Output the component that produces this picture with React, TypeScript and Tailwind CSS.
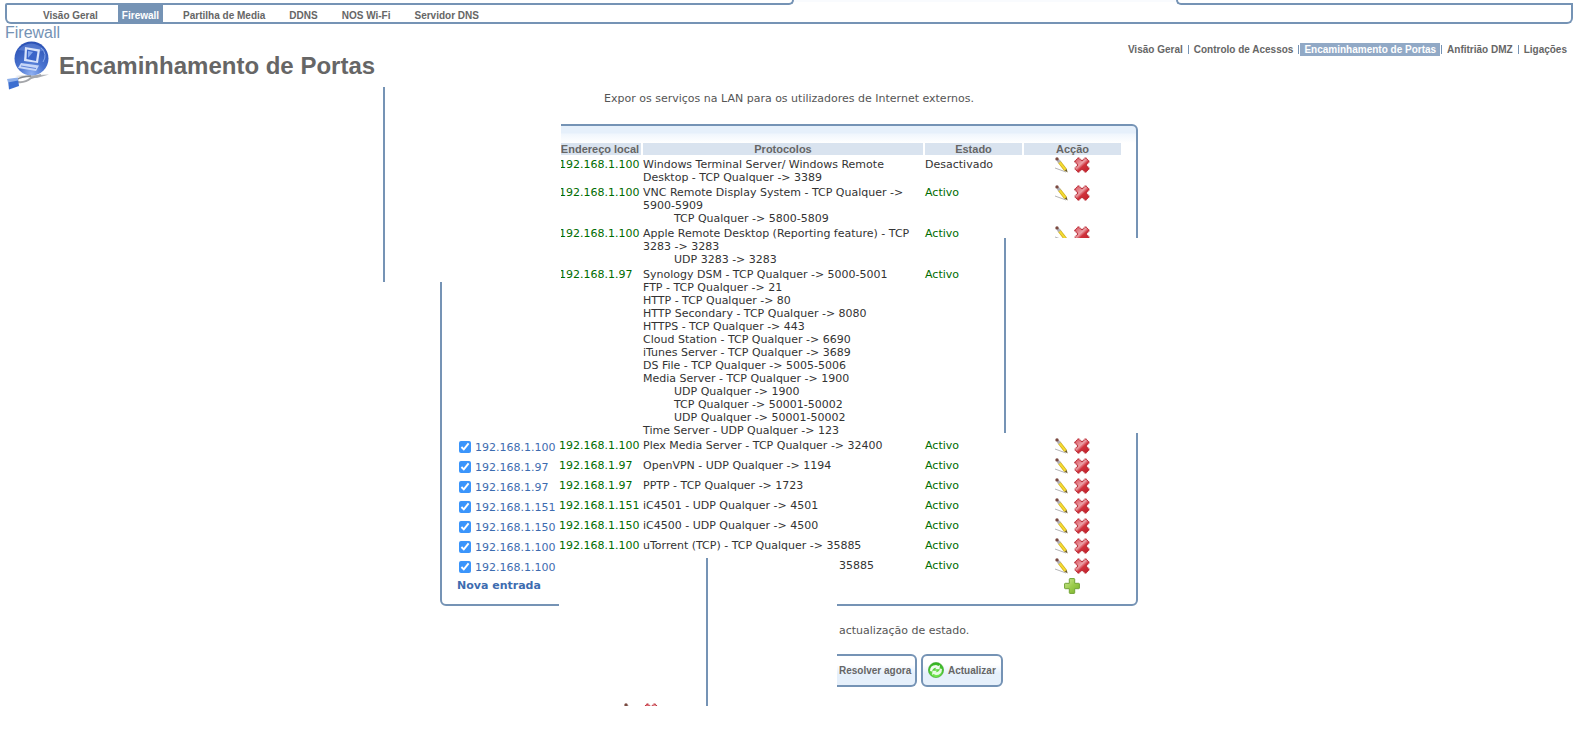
import React from "react";

const ARIAL = "font-['Liberation_Sans',Arial,sans-serif]";
const VERDANA = "font-['DejaVu_Sans',Verdana,sans-serif]";

function GlobeIcon() {
  return (
    <svg width="44" height="50" viewBox="0 0 44 50" aria-hidden="true">
      <defs>
        <radialGradient id="globe" cx="50%" cy="95%" r="95%">
          <stop offset="0" stopColor="#8fb0f2" />
          <stop offset="0.4" stopColor="#4a74d0" />
          <stop offset="1" stopColor="#2a50b4" />
        </radialGradient>
      </defs>
      <path d="M8 35 L42 33.5 L30 37 Z" fill="#b0b3b8" />
      <circle cx="24.5" cy="17.500" r="17" fill="url(#globe)" />
      <path d="M11 9 Q24 -4 38 9 Q32 12 25 10 Q17 10 11 9Z" fill="#8fb0f0" opacity="0.35" />
      <path d="M34 7 Q41 13 36 21" stroke="#89a9ea" strokeWidth="1" fill="none" />
      <path d="M18 6 L33 8.500 L31 22 L17 20 Z" fill="#d8e3fa" />
      <path d="M20 8.500 L30.500 10.500 L29 20 L19.500 18 Z" fill="#3a64c8" />
      <path d="M21 10 L26 11 L21 17 Z" fill="#86a8ee" />
      <path d="M14 22 L32 24.500 L29 30 L11 27 Z" fill="#c6d6f8" />
      <path d="M14 25 L29 27.500" stroke="#5f84d8" strokeWidth="1" />
      <path d="M11 41 Q18 42 24 37 L34 34" stroke="#a4a6aa" strokeWidth="2" fill="none" />
      <path d="M9 39 Q14 35.500 24 35" stroke="#85888d" strokeWidth="1.500" fill="none" />
      <path d="M1 39 L11 37.500 L12 45 L2 48.500 Z" fill="#3d6fd0" />
      <path d="M0 38 L11 36.500 L11 39.500 L1 41.500Z" fill="#8fb0ea" />
    </svg>
  );
}

function PencilIcon() {
  return (
    <svg width="16" height="16" viewBox="0 0 16 16" aria-hidden="true">
      <path d="M1 11 L12 15" stroke="#b5b5b5" strokeWidth="1" />
      <path d="M5 4.500 L11.600 13" stroke="#cfae1c" strokeWidth="3.400" />
      <path d="M5 4.500 L11.600 13" stroke="#f4dc34" strokeWidth="2" />
      <path d="M3.600 2.700 L5.600 5.300" stroke="#b0b0b8" strokeWidth="3" />
      <circle cx="3" cy="1.900" r="1.700" fill="#7a4a40" />
      <path d="M10.700 13.600 L12.800 12 L13.600 15.600 Z" fill="#6b5a28" />
    </svg>
  );
}

function DeleteIcon() {
  return (
    <svg width="16" height="16" viewBox="0 0 16 16" aria-hidden="true">
      <defs>
        <linearGradient id="cross" x1="0" y1="0" x2="0.9" y2="1">
          <stop offset="0" stopColor="#d94a55" />
          <stop offset="0.450" stopColor="#eba0a6" />
          <stop offset="0.600" stopColor="#d0333d" />
          <stop offset="1" stopColor="#c4202a" />
        </linearGradient>
      </defs>
      <path
        d="M4.500 .6 L8 4 L11.500 .6 L15.400 4.500 L12 8 L15.400 11.500 L11.500 15.400 L8 12 L4.500 15.400 L.6 11.500 L4 8 L.6 4.500 Z"
        fill="url(#cross)"
        stroke="#b92c36"
        strokeWidth="1.100"
        strokeDasharray="1.200 0.500"
      />
    </svg>
  );
}

function AddIcon() {
  return (
    <svg width="16" height="16" viewBox="0 0 16 16" aria-hidden="true">
      <defs>
        <linearGradient id="plus" x1="0" y1="0" x2="1" y2="1">
          <stop offset="0" stopColor="#cfe89a" />
          <stop offset="0.500" stopColor="#9ccc4c" />
          <stop offset="1" stopColor="#78b02c" />
        </linearGradient>
      </defs>
      <path
        d="M6 .6 H10 Q10.700 .6 10.700 1.300 V5.300 H14.700 Q15.400 5.300 15.400 6 V10 Q15.400 10.700 14.700 10.700 H10.700 V14.700 Q10.700 15.400 10 15.400 H6 Q5.300 15.400 5.300 14.700 V10.700 H1.300 Q.6 10.700 .6 10 V6 Q.6 5.300 1.300 5.300 H5.300 V1.300 Q5.300 .6 6 .6Z"
        fill="url(#plus)"
        stroke="#72a336"
        strokeWidth="1"
      />
    </svg>
  );
}

function RefreshIcon() {
  return (
    <svg width="16" height="16" viewBox="0 0 16 16" aria-hidden="true">
      <defs>
        <radialGradient id="refresh" cx="50%" cy="80%" r="80%">
          <stop offset="0" stopColor="#7df05a" />
          <stop offset="1" stopColor="#2fae1c" />
        </radialGradient>
      </defs>
      <circle cx="8" cy="8" r="7.600" fill="url(#refresh)" stroke="#3aa52a" strokeWidth="0.600" />
      <path d="M2 9 Q2 3 8 3 L10.500 4 L12 3 L11.500 7.200 L7 7.200 L8.500 5.800 Q5 5.500 4 9.500 Z" fill="#fff" opacity="0.920" />
      <path d="M14 7 Q14 13 8 13 L5.500 12 L4 13 L4.500 8.800 L9 8.800 L7.500 10.200 Q11 10.500 12 6.500 Z" fill="#fff" opacity="0.850" />
    </svg>
  );
}

type Line = { text: string; sub?: boolean };
type Entry = {
  host?: string;
  local?: string;
  lines: Line[];
  state: string;
  actions: boolean;
  clipped?: boolean;
};

const l = (text: string): Line => ({ text });
const s = (text: string): Line => ({ text, sub: true });

const entries: Entry[] = [
  { local: "192.168.1.100", lines: [l("Windows Terminal Server/ Windows Remote Desktop - TCP Qualquer -> 3389")], state: "Desactivado", actions: true },
  { local: "192.168.1.100", lines: [l("VNC Remote Display System - TCP Qualquer -> 5900-5909"), s("TCP Qualquer -> 5800-5809")], state: "Activo", actions: true },
  { local: "192.168.1.100", lines: [l("Apple Remote Desktop (Reporting feature) - TCP 3283 -> 3283"), s("UDP 3283 -> 3283")], state: "Activo", actions: true },
  {
    local: "192.168.1.97",
    lines: [
      l("Synology DSM - TCP Qualquer -> 5000-5001"),
      l("FTP - TCP Qualquer -> 21"),
      l("HTTP - TCP Qualquer -> 80"),
      l("HTTP Secondary - TCP Qualquer -> 8080"),
      l("HTTPS - TCP Qualquer -> 443"),
      l("Cloud Station - TCP Qualquer -> 6690"),
      l("iTunes Server - TCP Qualquer -> 3689"),
      l("DS File - TCP Qualquer -> 5005-5006"),
      l("Media Server - TCP Qualquer -> 1900"),
      s("UDP Qualquer -> 1900"),
      s("TCP Qualquer -> 50001-50002"),
      s("UDP Qualquer -> 50001-50002"),
      l("Time Server - UDP Qualquer -> 123"),
    ],
    state: "Activo",
    actions: false,
  },
  { host: "192.168.1.100", local: "192.168.1.100", lines: [l("Plex Media Server - TCP Qualquer -> 32400")], state: "Activo", actions: true },
  { host: "192.168.1.97", local: "192.168.1.97", lines: [l("OpenVPN - UDP Qualquer -> 1194")], state: "Activo", actions: true },
  { host: "192.168.1.97", local: "192.168.1.97", lines: [l("PPTP - TCP Qualquer -> 1723")], state: "Activo", actions: true },
  { host: "192.168.1.151", local: "192.168.1.151", lines: [l("iC4501 - UDP Qualquer -> 4501")], state: "Activo", actions: true },
  { host: "192.168.1.150", local: "192.168.1.150", lines: [l("iC4500 - UDP Qualquer -> 4500")], state: "Activo", actions: true },
  { host: "192.168.1.100", local: "192.168.1.100", lines: [l("uTorrent (TCP) - TCP Qualquer -> 35885")], state: "Activo", actions: true },
  { host: "192.168.1.100", lines: [l("35885")], state: "Activo", actions: true, clipped: true },
];

function EntryRow({ entry, index }: { entry: Entry; index: number }) {
  const id = `entry-${index}`;
  return (
    <tr className="align-top">
      <td className="p-0">
        {entry.host && (
          <div className="flex h-[18px] items-center gap-1 pl-[2px]">
            <input id={id} type="checkbox" defaultChecked className="m-0 size-3 shrink-0 accent-[#3b95fb]" />
            <label htmlFor={id} className="text-[#3d6cb0]">{entry.host}</label>
          </div>
        )}
      </td>
      <td className="p-0 text-[#006c00]">
        <div className="-mb-px whitespace-nowrap pt-px">{entry.local}</div>
      </td>
      <td className="p-0">
        <div className={entry.clipped ? "-mb-px pl-[196px] pt-px" : "-mb-px pt-px"}>
          {entry.lines.map((line, i) => (
            <div key={i} className={line.sub ? "pl-[31px]" : ""}>{line.text}</div>
          ))}
        </div>
      </td>
      <td className={entry.state === "Activo" ? "p-0 text-[#006c00]" : "p-0"}>
        <div className="-mb-px pt-px">{entry.state}</div>
      </td>
      <td className="p-0">
        {entry.actions && (
          <div className="flex h-[18px] items-start justify-center gap-1 pr-[2px]">
            <button type="button" aria-label="Editar"><PencilIcon /></button>
            <button type="button" aria-label="Remover"><DeleteIcon /></button>
          </div>
        )}
      </td>
    </tr>
  );
}

const tabs = ["Partilha de Media", "DDNS", "NOS Wi-Fi", "Servidor DNS"];

export default function App() {
  return (
    <div className={`min-h-screen bg-white text-[11px] leading-[13px] text-[#333333] ${VERDANA}`}>
      <header className={`px-[5px] text-[10px] font-bold text-[#666666] ${ARIAL}`}>
        <div className="flex h-[5px]">
          <div className="flex w-[calc(50%+5px)] flex-col">
            <div className="h-[3px] w-full">
              <div className="ml-auto h-[5px] w-2 rounded-br-[6px] border-b-2 border-r-2 border-[#7593b5]" />
            </div>
            <div className="mr-[6px] h-[2px] rounded-tl-[2px] bg-[#7593b5]" />
          </div>
          <div className="h-[2px] flex-1 bg-[#f9fbfe]" />
          <div className="flex w-[calc(25%+5px)] flex-col">
            <div className="h-[3px] w-full">
              <div className="h-[5px] w-2 rounded-bl-[6px] border-b-2 border-l-2 border-[#7593b5]" />
            </div>
            <div className="ml-[6px] h-[2px] bg-[#7593b5]" />
          </div>
        </div>
        <nav className="flex h-[19px] rounded-b-[6px] border-2 border-t-0 border-[#7593b5] pl-9">
          <a href="#geral" className="pt-1">Visão Geral</a>
          <a href="#firewall" className="mx-5 bg-[#7593b5] px-1 pt-1 text-white">Firewall</a>
          <div className="flex gap-6 pt-1">
            {tabs.map((t) => (
              <a key={t} href="#tab">{t}</a>
            ))}
          </div>
        </nav>
      </header>

      <div className={`flex items-start justify-between ${ARIAL}`}>
        <div className="pb-px pl-[5px]">
          <p className="text-[16px] leading-[17px] text-[#7593b5]">Firewall</p>
          <div className="flex items-center gap-2 pl-[2px]">
            <GlobeIcon />
            <h1 className="text-[24px] font-bold leading-[28px] text-[#666666]">Encaminhamento de Portas</h1>
          </div>
        </div>
        <nav className="mt-[19px] flex pr-[11px] text-[10px] font-bold text-[#666666]">
          <a href="#v" className="pr-[5px]">Visão Geral</a>
          <span className="my-[2px] border-l border-[#7593b5]" />
          <a href="#c" className="px-[5px]">Controlo de Acessos</a>
          <span className="my-[2px] mr-px border-l border-[#7593b5]" />
          <a href="#e" className="bg-[#91a9c6] px-1 text-white">Encaminhamento de Portas</a>
          <span className="my-[2px] ml-px border-l border-[#7593b5]" />
          <a href="#a" className="px-[5px]">Anfitrião DMZ</a>
          <span className="my-[2px] border-l border-[#7593b5]" />
          <a href="#l" className="pl-[5px]">Ligações</a>
        </nav>
      </div>

      <main className="relative mx-auto w-[698px] max-w-full">
        <p className="text-center text-[#555555]">Expor os serviços na LAN para os utilizadores de Internet externos.</p>

        <section className="mt-[19px] rounded-[6px] border-2 border-[#7593b5] bg-[linear-gradient(#e6f0fb_0,#e6f0fb_7px,#f0f6fd_8px,#ffffff_17px)] px-[13px] pb-2 pt-[15px]">
          <table className="w-full table-fixed border-separate border-spacing-[2px]">
            <colgroup>
              <col className="w-[100px]" />
              <col className="w-[82px]" />
              <col />
              <col className="w-[97px]" />
              <col className="w-[97px]" />
            </colgroup>
            <thead>
              <tr className={`text-[11px] leading-[12px] text-[#666666] ${ARIAL}`}>
                <td />
                <th className="whitespace-nowrap bg-[#d9e3ef] p-0">Endereço local</th>
                <th className="bg-[#d9e3ef] p-0">Protocolos</th>
                <th className="bg-[#d9e3ef] p-0">Estado</th>
                <th className="bg-[#d9e3ef] p-0">Acção</th>
              </tr>
            </thead>
            <tbody>
              {entries.map((e, i) => (
                <EntryRow key={i} entry={e} index={i} />
              ))}
              <tr className="align-top">
                <td className="p-0" colSpan={4}>
                  <div className="-mb-px pt-px">
                    <a href="#nova" className="font-bold text-[#3d6cb0]">Nova entrada</a>
                  </div>
                </td>
                <td className="p-0">
                  <div className="flex justify-center pr-[2px]">
                    <button type="button" aria-label="Adicionar"><AddIcon /></button>
                  </div>
                </td>
              </tr>
            </tbody>
          </table>
        </section>

        <p className="mt-[18px] pl-[399px] text-[#555555]">actualização de estado.</p>
        <div className={`mt-[17px] flex gap-1 pl-[397px] text-[10px] font-bold text-[#666666] ${ARIAL}`}>
          <button type="button" className="h-[33px] w-[80px] whitespace-nowrap rounded-r-[6px] border-2 border-l-0 border-[#7593b5] bg-linear-to-b from-white from-30% to-[#e6f0fb] to-60% pl-[2px] text-left">
            Resolver agora
          </button>
          <button type="button" className="flex h-[33px] w-[82px] items-center gap-1 rounded-[6px] border-2 border-[#7593b5] bg-linear-to-b from-white from-30% to-[#e6f0fb] to-60% pb-px pl-[5px]">
            <RefreshIcon />
            Actualizar
          </button>
        </div>

        <div className="absolute -left-[57px] -top-[5px] h-[195px] w-[178px] border-l-2 border-[#7593b5] bg-[linear-gradient(90deg,transparent_50px,#ffffff_50px)]" />
        <div className="absolute left-[564px] top-[146px] h-[195px] w-[136px] border-l-2 border-[#7593b5] bg-white" />
        <div className="absolute left-[119px] top-[466px] flex h-[148px] w-[278px] items-end bg-white">
          <div className="flex h-[3px] w-[147px] items-start gap-1 overflow-hidden pl-[64px]">
            <PencilIcon />
            <DeleteIcon />
          </div>
          <div className="h-full border-l-2 border-[#7593b5]" />
        </div>
      </main>
    </div>
  );
}
